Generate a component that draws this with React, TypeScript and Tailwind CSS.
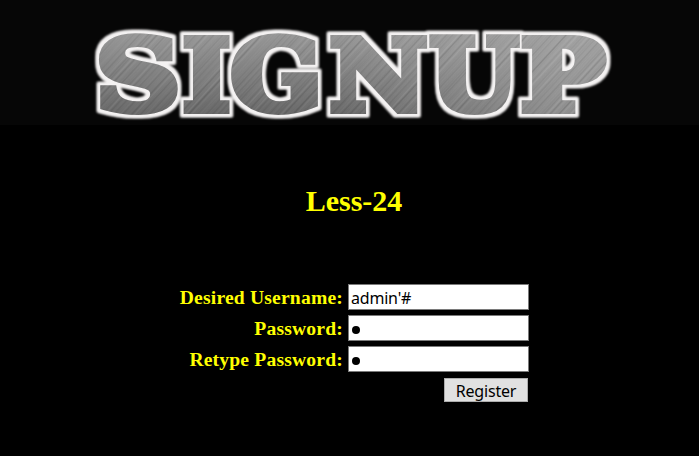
import React from "react";

type Glyph = { char: string; x: number; width: number };

const glyphs: Glyph[] = [
  { char: "S", x: 96, width: 84 },
  { char: "I", x: 183, width: 47 },
  { char: "G", x: 231, width: 91 },
  { char: "N", x: 330, width: 97 },
  { char: "U", x: 430, width: 88 },
  { char: "P", x: 521, width: 84 },
];

const scratches = Array.from({ length: 420 }, (_, i) => ({
  x: i * 1.9 - 120 + ((i * 37) % 11) * 0.3,
  light: (i * 7) % 5 < 2,
  opacity: 0.02 + ((i * 13) % 7) * 0.011,
}));

function Banner() {
  return (
    <header className="h-[125px] w-full bg-[#060606]">
      <svg className="overflow-visible" width="699" height="125" viewBox="0 0 699 125" role="img" aria-label="SIGNUP">
        <defs>
          <linearGradient id="metal" gradientUnits="userSpaceOnUse" x1="0" y1="30" x2="0" y2="118">
            <stop offset="0" stopColor="#9a9a9a" />
            <stop offset="0.5" stopColor="#808080" />
            <stop offset="1" stopColor="#646464" />
          </linearGradient>
          <linearGradient id="shine" gradientUnits="userSpaceOnUse" x1="340" y1="0" x2="560" y2="0">
            <stop offset="0" stopColor="#aaa" stopOpacity="0" />
            <stop offset="1" stopColor="#aaa" stopOpacity="0.6" />
          </linearGradient>
          <pattern id="brushed" patternUnits="userSpaceOnUse" width="699" height="150">
            <rect width="699" height="150" fill="url(#metal)" />
            <rect width="699" height="150" fill="url(#shine)" />
            {scratches.map((s, i) => (
              <line key={i} x1={s.x} y1="125" x2={s.x + 115} y2="0" stroke={s.light ? "#fff" : "#222"} strokeOpacity={s.opacity} strokeWidth="1.4" />
            ))}
          </pattern>
          <filter id="rim" filterUnits="userSpaceOnUse" x="0" y="0" width="699" height="125" colorInterpolationFilters="sRGB">
            <feMorphology in="SourceAlpha" operator="dilate" radius="3" result="edge" />
            <feFlood floodColor="#f4f2f2" />
            <feComposite in2="edge" operator="in" result="white" />
            <feGaussianBlur in="white" stdDeviation="1.8" result="glow" />
            <feGaussianBlur in="white" stdDeviation="0.9" result="soft" />
            <feMerge>
              <feMergeNode in="glow" />
              <feMergeNode in="soft" />
              <feMergeNode in="SourceGraphic" />
            </feMerge>
          </filter>
        </defs>
        <g fontSize="98" fontWeight="700" className="font-['DejaVu_Serif',serif]" fill="url(#brushed)" stroke="url(#brushed)" strokeWidth="8" filter="url(#rim)">
          {glyphs.map((g) => (
            <text key={g.char} x={g.x} y="110" textLength={g.width} lengthAdjust="spacingAndGlyphs">
              {g.char}
            </text>
          ))}
        </g>
      </svg>
    </header>
  );
}

const inputClass =
  "block h-[26px] w-[181px] border border-[#7a7a7a] bg-white px-[2px] pt-[2px] font-['Noto_Sans',sans-serif] text-[16px] leading-none tracking-[-0.2px] text-black outline-none";

function Field({ label, type, value }: { label: string; type: string; value: string }) {
  return (
    <div className="flex h-[31px] items-start">
      <label className="w-[343px] text-right text-[19.6px] leading-[27px] font-bold tracking-[0.18px]">{label}</label>
      <div className="pl-[5px]">
        {type === "password" ? (
          <div className={inputClass}>
            <span className="mt-[8px] ml-px block size-[8px] rounded-full bg-black" />
          </div>
        ) : (
          <input className={inputClass} type={type} defaultValue={value} />
        )}
      </div>
    </div>
  );
}

export default function App() {
  return (
    <main className="h-[456px] w-[699px] overflow-hidden bg-black font-['Liberation_Serif',serif] text-[#ffff00]">
      <Banner />
      <h1 className="pt-[56px] pl-[9px] text-center text-[30px] leading-[40px] font-bold">Less-24</h1>
      <form className="pt-[63px]">
        <Field label="Desired Username:" type="text" value="admin'#" />
        <Field label="Password:" type="password" value="1" />
        <Field label="Retype Password:" type="password" value="1" />
        <div className="flex w-[528px] justify-end pt-px">
          <button type="button" className="h-[24px] w-[84px] border border-[#adadad] bg-[#e1e1e1] pt-px font-['Noto_Sans',sans-serif] text-[16px] leading-none tracking-[-0.2px] text-black">
            Register
          </button>
        </div>
      </form>
    </main>
  );
}
